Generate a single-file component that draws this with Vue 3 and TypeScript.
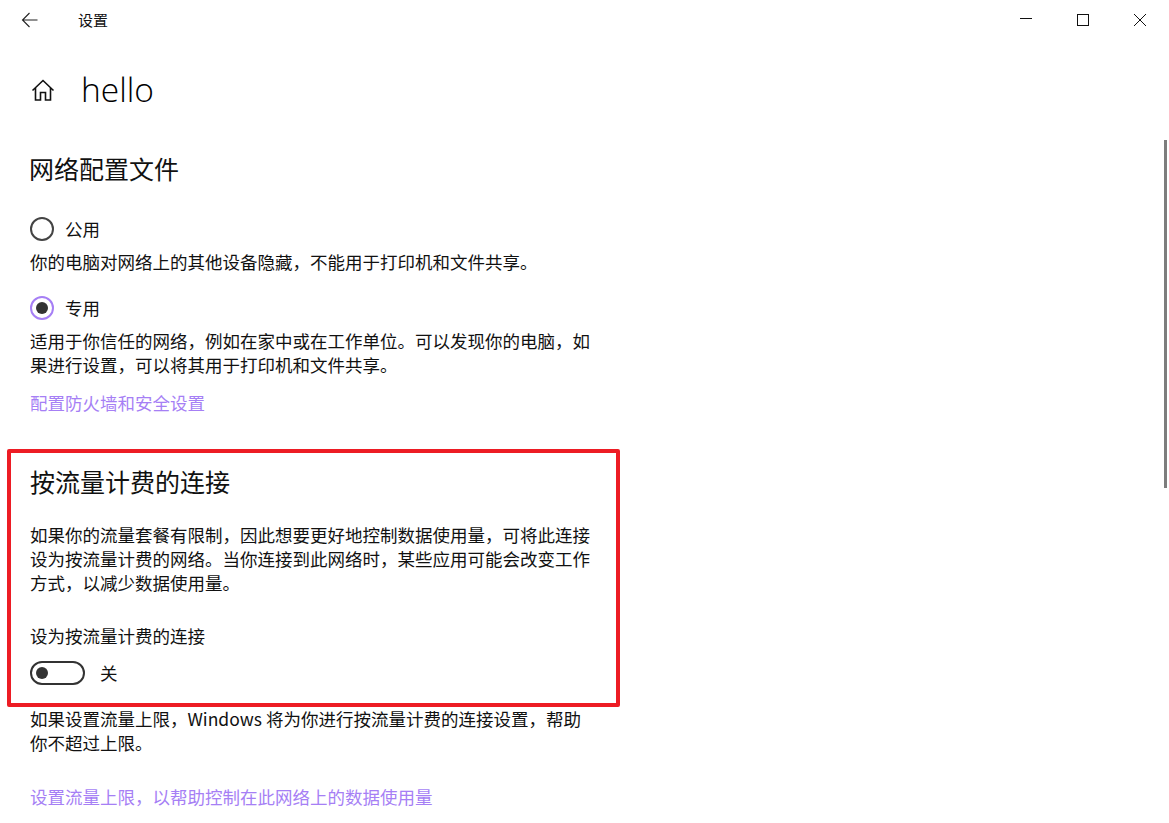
<script setup lang="ts">
const profiles = [
  { label: '公用', desc: ['你的电脑对网络上的其他设备隐藏，不能用于打印机和文件共享。'], checked: false },
  {
    label: '专用',
    desc: ['适用于你信任的网络，例如在家中或在工作单位。可以发现你的电脑，如', '果进行设置，可以将其用于打印机和文件共享。'],
    checked: true,
  },
]
</script>

<template>
  <div class="window">
    <header class="titlebar">
      <svg class="back" width="18" height="16" viewBox="0 0 18 16" fill="none" stroke="#222" stroke-width="1.1">
        <path d="M1.5 8H16.5M8.5 1L1.5 8L8.5 15" />
      </svg>
      <span class="app-name">设置</span>
      <div class="win-controls">
        <svg width="14" height="14" viewBox="0 0 14 14" fill="none" stroke="#111" stroke-width="1"><path d="M1 5.5H13" /></svg>
        <svg width="14" height="14" viewBox="0 0 14 14" fill="none" stroke="#111" stroke-width="1"><rect x="1.5" y="1.5" width="11" height="11" /></svg>
        <svg width="14" height="14" viewBox="0 0 14 14" fill="none" stroke="#111" stroke-width="1"><path d="M1 1L13 13M13 1L1 13" /></svg>
      </div>
    </header>

    <main class="content">
      <div class="page-head">
        <svg class="home" width="24" height="24" viewBox="0 0 24 24" fill="none" stroke="#111" stroke-width="1.6">
          <path d="M1.5 12.5L12 2.5L22.5 12.5M4.5 10V22H9.5V14.5H14.5V22H19.5V10" />
        </svg>
        <h1>hello</h1>
      </div>

      <h2 class="first">网络配置文件</h2>

      <div v-for="p in profiles" :key="p.label" class="profile">
        <div class="radio-row">
          <span class="radio" :class="{ checked: p.checked }"></span>
          <span>{{ p.label }}</span>
        </div>
        <p><template v-for="line in p.desc" :key="line">{{ line }}<br /></template></p>
      </div>

      <a class="link firewall">配置防火墙和安全设置</a>

      <section class="metered">
        <h2>按流量计费的连接</h2>
        <p class="intro">
          如果你的流量套餐有限制，因此想要更好地控制数据使用量，可将此连接<br />
          设为按流量计费的网络。当你连接到此网络时，某些应用可能会改变工作<br />
          方式，以减少数据使用量。
        </p>
        <div class="toggle-label">设为按流量计费的连接</div>
        <div class="toggle-row">
          <span class="toggle"><span class="knob"></span></span>
          <span>关</span>
        </div>
      </section>

      <p class="limit">
        如果设置流量上限，Windows 将为你进行按流量计费的连接设置，帮助<br />
        你不超过上限。
      </p>
      <a class="link cap">设置流量上限，以帮助控制在此网络上的数据使用量</a>
    </main>

    <div class="scrollbar"></div>
  </div>
</template>

<style>
html,
body {
  margin: 0;
  background: #fff;
  overflow: hidden;
}
</style>

<style scoped>
.window {
  position: relative;
  width: 1169px;
  height: 823px;
  overflow: hidden;
  background: #fff;
  color: #111;
  font-family: "Noto Sans CJK SC", "Open Sans", sans-serif;
  font-size: 17.5px;
  line-height: 24px;
}

.titlebar {
  display: flex;
  align-items: center;
  height: 40px;
}

.back {
  margin-left: 21px;
}

.app-name {
  margin-left: 39px;
  font-size: 15px;
}

.win-controls {
  display: flex;
  gap: 43px;
  margin-left: auto;
  margin-right: 22px;
}

.content {
  padding-left: 30px;
}

.page-head {
  display: flex;
  align-items: center;
  height: 60px;
  margin-top: 20px;
}

.home {
  margin-left: 1px;
}

h1 {
  margin: -2px 0 0 26px;
  font-family: "Open Sans", sans-serif;
  font-size: 33.5px;
  font-weight: 300;
  line-height: 60px;
  color: #000;
}

h2 {
  margin: 0;
  font-size: 25px;
  font-weight: 400;
  line-height: 36px;
}

h2.first {
  margin-top: 30px;
  margin-left: -1px;
}

p {
  margin: 0;
}

.profile {
  margin-top: 31px;
}

.profile + .profile {
  margin-top: 22px;
}

.profile p {
  margin-top: 9px;
}

.radio-row {
  display: flex;
  align-items: center;
  gap: 11px;
  height: 24px;
}

.radio {
  box-sizing: border-box;
  display: flex;
  align-items: center;
  justify-content: center;
  width: 24px;
  height: 24px;
  border: 2.5px solid #444;
  border-radius: 50%;
}

.radio.checked {
  border-color: #a67ff5;
}

.radio.checked::after {
  content: "";
  width: 12px;
  height: 12px;
  border-radius: 50%;
  background: #333;
}

.link {
  display: block;
  color: #a67ff5;
}

.firewall {
  margin-top: 14px;
}

.metered {
  box-sizing: border-box;
  width: 613px;
  height: 258px;
  margin: 34px 0 0 -23px;
  padding: 10px 0 0 19px;
  border: 4px solid #ed1c24;
  border-radius: 2px;
}

.intro {
  margin-top: 24px;
}

.toggle-label {
  margin-top: 29px;
}

.toggle-row {
  display: flex;
  align-items: center;
  gap: 15px;
  height: 24px;
  margin-top: 13px;
}

.toggle {
  box-sizing: border-box;
  display: flex;
  align-items: center;
  width: 55px;
  height: 24px;
  padding-left: 4px;
  border: 2.5px solid #333;
  border-radius: 12px;
}

.knob {
  width: 12px;
  height: 12px;
  border-radius: 50%;
  background: #333;
}

.limit {
  margin-top: 0;
}

.cap {
  margin-top: 30px;
}

.scrollbar {
  position: absolute;
  top: 140px;
  left: 1164px;
  width: 3px;
  height: 348px;
  background: #7d7d7d;
}
</style>
